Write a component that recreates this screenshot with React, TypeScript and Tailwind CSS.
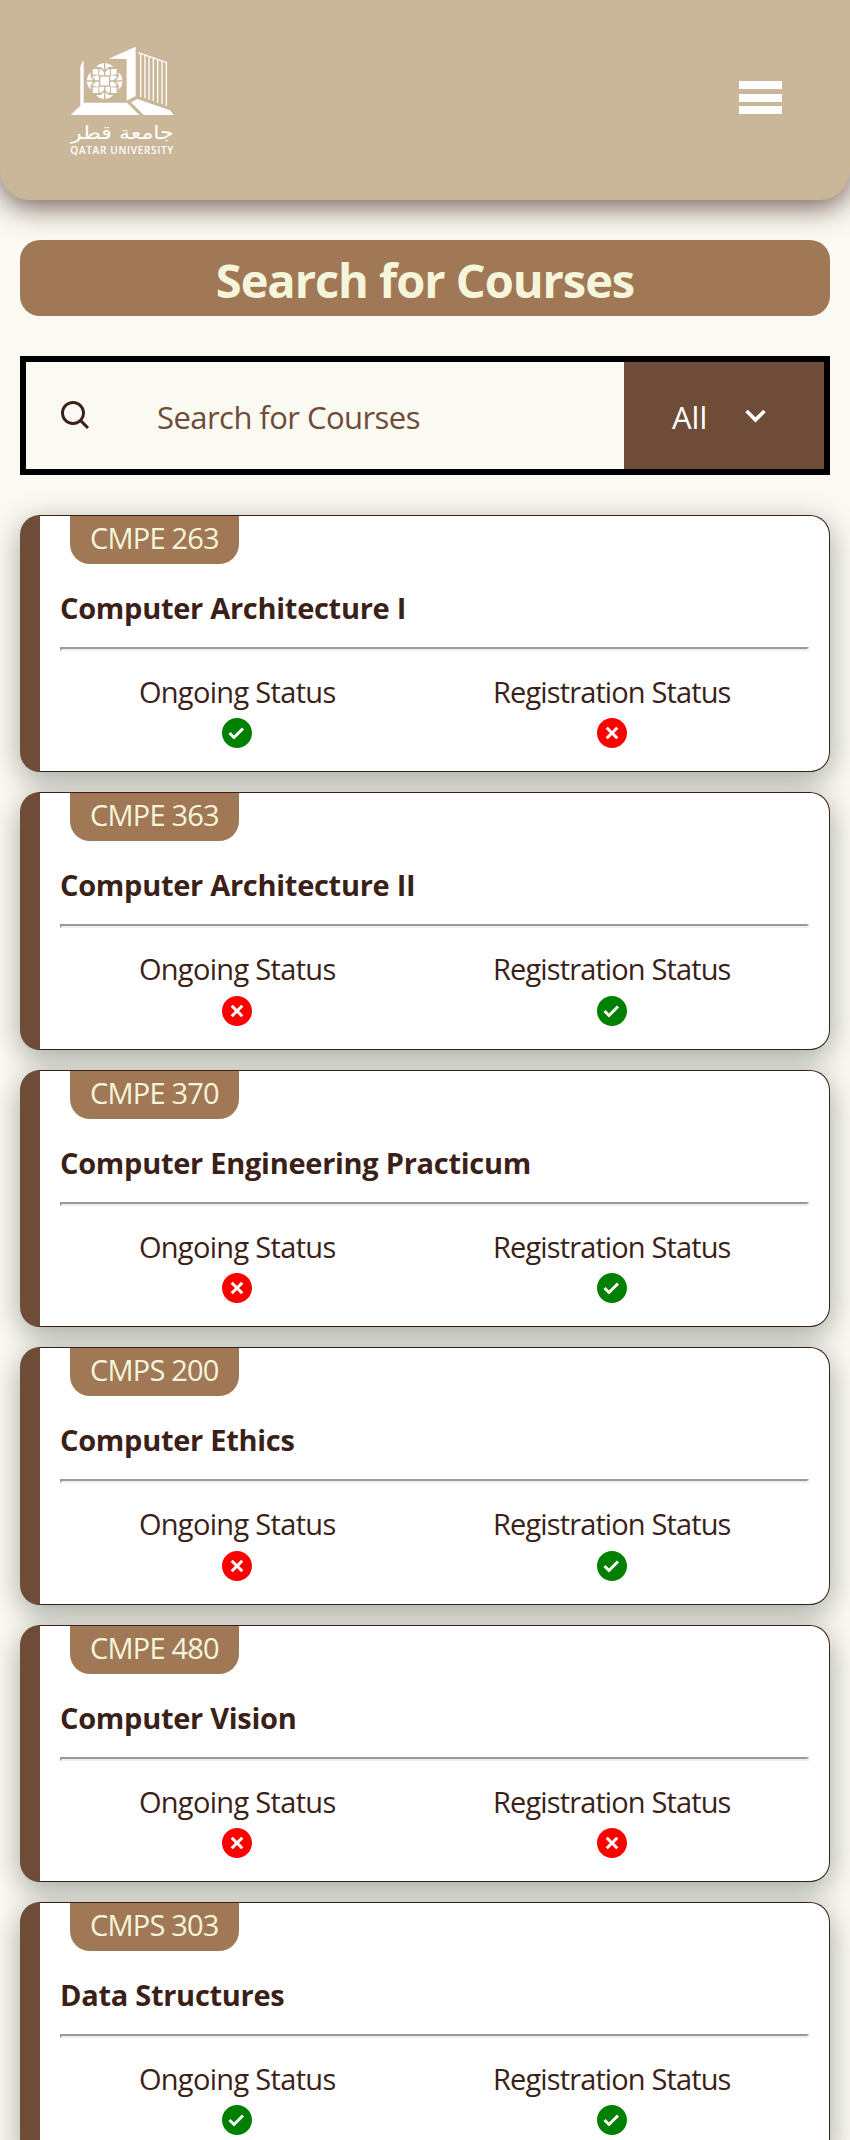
import { BiChevronDown, BiSearch, BiSolidCheckCircle, BiSolidXCircle } from "react-icons/bi";

type Course = { code: string; name: string; ongoing: boolean; registration: boolean };

const courses: Course[] = [
  { code: "CMPE 263", name: "Computer Architecture I", ongoing: true, registration: false },
  { code: "CMPE 363", name: "Computer Architecture II", ongoing: false, registration: true },
  { code: "CMPE 370", name: "Computer Engineering Practicum", ongoing: false, registration: true },
  { code: "CMPS 200", name: "Computer Ethics", ongoing: false, registration: true },
  { code: "CMPE 480", name: "Computer Vision", ongoing: false, registration: false },
  { code: "CMPS 303", name: "Data Structures", ongoing: true, registration: true },
];

const sides = [0, 90, 180, 270];

function Logo() {
  return (
    <svg viewBox="0 0 450 420" className="h-[140px] w-[150px]" fill="#fff">
      <path d="M98 92 L101 96 V218 H231 L268 255 H62 L91 227 V110 Z" />
      <path d="M176 86 L257 50 V198 L230 212 V87 Z" />
      <path d="M243 217 L262 207 L360 241 L371 255 H281 Z" />
      <g fill="none" stroke="#fff" strokeWidth="4">
        <path d="M265 68 L350 98" />
        <path d="M272 71V201M285 75V205M297 80V209M310 84V213M323 88V218M336 93V222M349 97V228" />
      </g>
      <g transform="translate(164 153)">
        <rect x="-13" y="-13" width="26" height="26" />
        {sides.map((angle) => (
          <g key={angle} transform={`rotate(${angle})`}>
            <path d="M-2 -17 H-14 L-17 -20 L-15 -34 L-12 -37 L-2 -27 Z" />
            <path d="M2 -17 H14 L17 -20 L15 -34 L12 -37 L2 -27 Z" />
            <path d="M-2 -34 L-12 -42 L-26 -42 L-16 -50 L-2 -54 Z" />
            <path d="M2 -34 L12 -42 L26 -42 L16 -50 L2 -54 Z" />
            <rect x="19" y="-36" width="17" height="17" />
          </g>
        ))}
      </g>
      <text
        x="217"
        y="327"
        textAnchor="middle"
        textLength="308"
        lengthAdjust="spacingAndGlyphs"
        className="font-['DejaVu_Sans',sans-serif] text-[56px]"
      >
        جامعة قطر
      </text>
      <text
        x="61"
        y="371"
        textLength="311"
        lengthAdjust="spacingAndGlyphs"
        className="font-['Open_Sans',sans-serif] text-[31px] font-semibold tracking-[2px]"
      >
        QATAR UNIVERSITY
      </text>
    </svg>
  );
}

function StatusIcon({ ok }: { ok: boolean }) {
  return ok ? (
    <BiSolidCheckCircle className="size-9 text-[#008000]" />
  ) : (
    <BiSolidXCircle className="size-9 text-[#ff0000]" />
  );
}

function CourseCard({ course }: { course: Course }) {
  return (
    <article className="h-[257.4px] shrink-0 rounded-[20px] border border-l-[20px] border-[#3b1f19] border-l-[#6f4c38] bg-white pr-5 pl-5 shadow-[0_8px_30px_rgba(0,10,0,0.35)]">
      <div className="ml-[10px] flex h-12 w-fit items-start rounded-b-[20px] bg-[#a07855] px-5 text-[29px] leading-[43px] tracking-[-0.8px] text-[#f5f5dc]">
        {course.code}
      </div>
      <h2 className="mt-[24px] h-10 text-[29px] leading-10 font-bold tracking-[-0.28px]">{course.name}</h2>
      <hr className="mt-[19px] h-1 border-2 border-t-[#9a9a9a] border-r-[#eee] border-b-[#eee] border-l-[#9a9a9a]" />
      <div className="mr-[10px] -ml-[10px] flex pt-[24px]">
        <div className="flex flex-1 flex-col items-center">
          <span className="h-[40.4px] text-[29px] leading-[33px] tracking-[-0.68px]">Ongoing Status</span>
          <StatusIcon ok={course.ongoing} />
        </div>
        <div className="flex flex-1 flex-col items-center">
          <span className="h-[40.4px] text-[29px] leading-[33px] tracking-[-0.87px]">Registration Status</span>
          <StatusIcon ok={course.registration} />
        </div>
      </div>
    </article>
  );
}

export default function App() {
  return (
    <div className="h-[2140px] w-[850px] overflow-hidden bg-[#fafaf2] font-['Open_Sans','Noto_Sans',sans-serif] text-[#3b1f19]">
      <header className="flex h-[200px] items-start justify-between rounded-b-[30px] bg-[#cab799] pt-[30px] pr-[68px] pl-[50px] shadow-[0_6px_30px_rgba(59,29,23,0.75)]">
        <Logo />
        <button aria-label="Menu" className="mt-[51px] flex w-[43px] flex-col gap-[4.5px]">
          <span className="h-2 w-full bg-white" />
          <span className="h-2 w-full bg-white" />
          <span className="h-2 w-full bg-white" />
        </button>
      </header>
      <main className="flex flex-col px-5 pt-10">
        <h1 className="h-[76px] rounded-[20px] bg-[#a07855] text-center text-[47px] leading-[81px] font-bold tracking-[-1.05px] text-[#f5f5dc]">
          Search for Courses
        </h1>
        <div className="mt-10 flex h-[119px] border-[6px] border-black">
          <div className="flex flex-1 items-start pl-[31.5px]">
            <BiSearch className="mt-[36px] size-9" />
            <span className="ml-[63.5px] text-[31px] leading-[110px] tracking-[-0.55px] text-[#6f4c38]">
              Search for Courses
            </span>
          </div>
          <div className="flex w-[200px] items-start bg-[#6f4c38] pl-[48px] text-white">
            <span className="w-[36px] text-[31px] leading-[110px]">All</span>
            <BiChevronDown className="mt-[31px] ml-[26px] size-[43px]" />
          </div>
        </div>
        <section className="mt-10 flex flex-col gap-5">
          {courses.map((course) => (
            <CourseCard key={course.code} course={course} />
          ))}
        </section>
      </main>
    </div>
  );
}
